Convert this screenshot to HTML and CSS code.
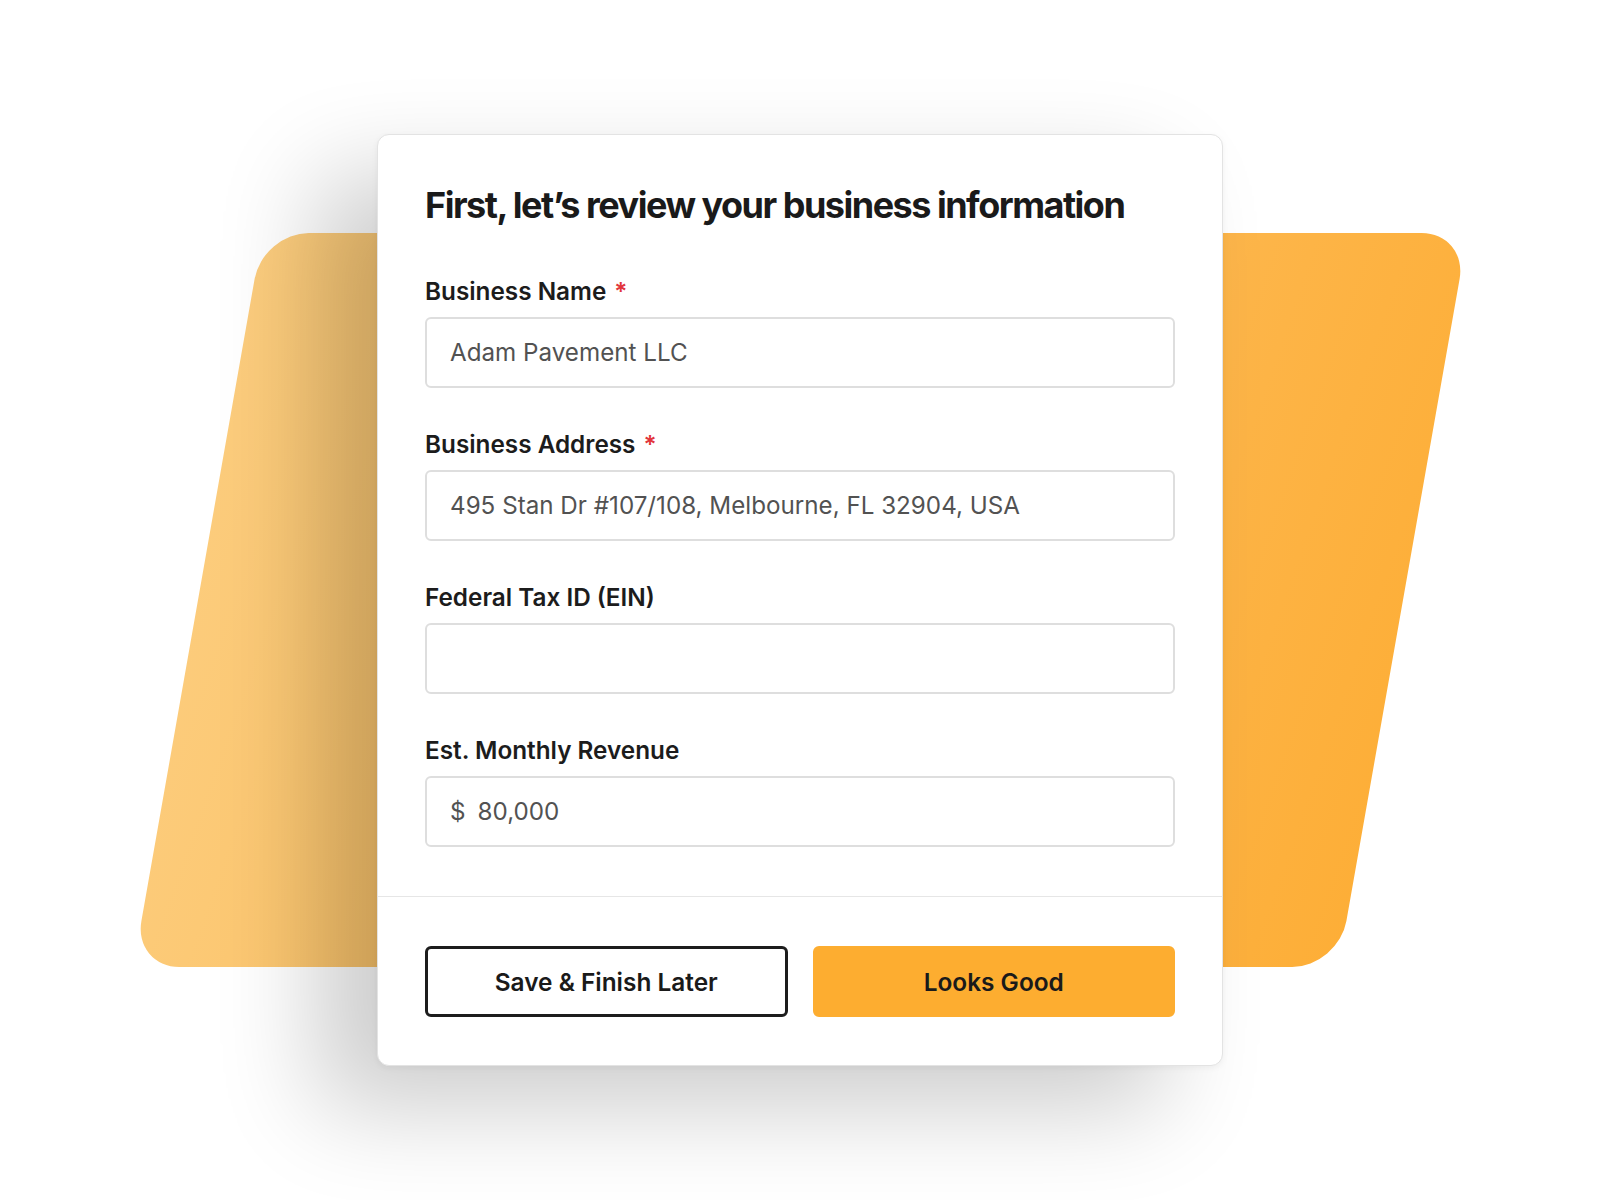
FILE: index.html
```html
<!DOCTYPE html>
<html lang="en">
<head>
<meta charset="utf-8">
<title>Business information</title>
<link rel="stylesheet" href="styles.css">
</head>
<body>
<main class="stage">
  <div class="backdrop" aria-hidden="true"></div>
  <section class="card">
    <div class="card-body">
      <h1 class="title">First, let’s review your business information</h1>
      <div class="fields">
        <div class="field">
          <label class="label" for="f-name">Business Name<span class="req">*</span></label>
          <div class="input-box"><input class="input" id="f-name" type="text" value="Adam Pavement LLC"></div>
        </div>
        <div class="field">
          <label class="label" for="f-addr">Business Address<span class="req">*</span></label>
          <div class="input-box"><input class="input" id="f-addr" type="text" value="495 Stan Dr #107/108, Melbourne, FL 32904, USA"></div>
        </div>
        <div class="field">
          <label class="label" for="f-ein">Federal Tax ID (EIN)</label>
          <div class="input-box"><input class="input" id="f-ein" type="text" value=""></div>
        </div>
        <div class="field">
          <label class="label" for="f-rev">Est. Monthly Revenue</label>
          <div class="input-box"><span class="prefix">$</span><input class="input" id="f-rev" type="text" value="80,000"></div>
        </div>
      </div>
    </div>
    <div class="card-footer">
      <button class="btn btn-outline" type="button">Save &amp; Finish Later</button>
      <button class="btn btn-primary" type="button">Looks Good</button>
    </div>
  </section>
</main>
</body>
</html>
```
FILE: styles.css
```css
* { box-sizing: border-box; }

html, body {
  margin: 0;
  padding: 0;
  background: #ffffff;
}

body {
  font-family: Inter, "Noto Sans", "Liberation Sans", sans-serif;
  color: #1c1c1c;
}

.stage {
  display: grid;
  width: 1600px;
  height: 1200px;
  place-items: center;
  overflow: hidden;
}

.backdrop,
.card {
  grid-area: 1 / 1;
}

.backdrop {
  width: 1205px;
  height: 734px;
  border-radius: 46px;
  transform: skewX(-10deg);
  background: linear-gradient(100deg, #fccd7e 0%, #fcc46a 30%, #fdb850 65%, #fdae37 100%);
}

.card {
  position: relative;
  width: 846px;
  background: #ffffff;
  border: 1px solid #e3e3e3;
  border-radius: 12px;
  box-shadow: -60px 42px 100px rgba(0, 0, 0, 0.2), 0 2px 6px rgba(0, 0, 0, 0.05);
}

.card-body {
  padding: 47px 47px 49px;
}

.title {
  margin: 0 0 48px;
  font-size: 36px;
  line-height: 46px;
  font-weight: 700;
  letter-spacing: -1.5px;
  color: #1a1a1a;
}

.fields {
  display: flex;
  flex-direction: column;
  gap: 41px;
}

.field {
  display: flex;
  flex-direction: column;
}

.label {
  display: block;
  margin-bottom: 11px;
  font-size: 24.3px;
  line-height: 30px;
  font-weight: 600;
  color: #1c1c1c;
}

.req {
  margin-left: 8px;
  color: #e2363b;
}

.input-box {
  display: flex;
  align-items: center;
  height: 71px;
  padding: 0 23px;
  border: 2px solid #dedede;
  border-radius: 6px;
  background: #ffffff;
}

.input {
  flex: 1;
  min-width: 0;
  height: 100%;
  padding: 0;
  border: 0;
  outline: none;
  background: transparent;
  font-family: inherit;
  font-size: 24.2px;
  font-weight: 400;
  color: #525252;
}

.prefix {
  margin-right: 12px;
  font-size: 24.2px;
  color: #525252;
}

.card-footer {
  display: grid;
  grid-template-columns: 1fr 1fr;
  gap: 25px;
  padding: 49px 47px 48px;
  border-top: 1px solid #e6e6e6;
}

.btn {
  height: 71px;
  border-radius: 6px;
  font-family: inherit;
  font-size: 24.4px;
  font-weight: 600;
  color: #1a1a1a;
  cursor: pointer;
}

.btn-outline {
  background: #ffffff;
  border: 3px solid #1d1d1d;
}

.btn-primary {
  background: #fdad30;
  border: 3px solid #fdad30;
}
```
